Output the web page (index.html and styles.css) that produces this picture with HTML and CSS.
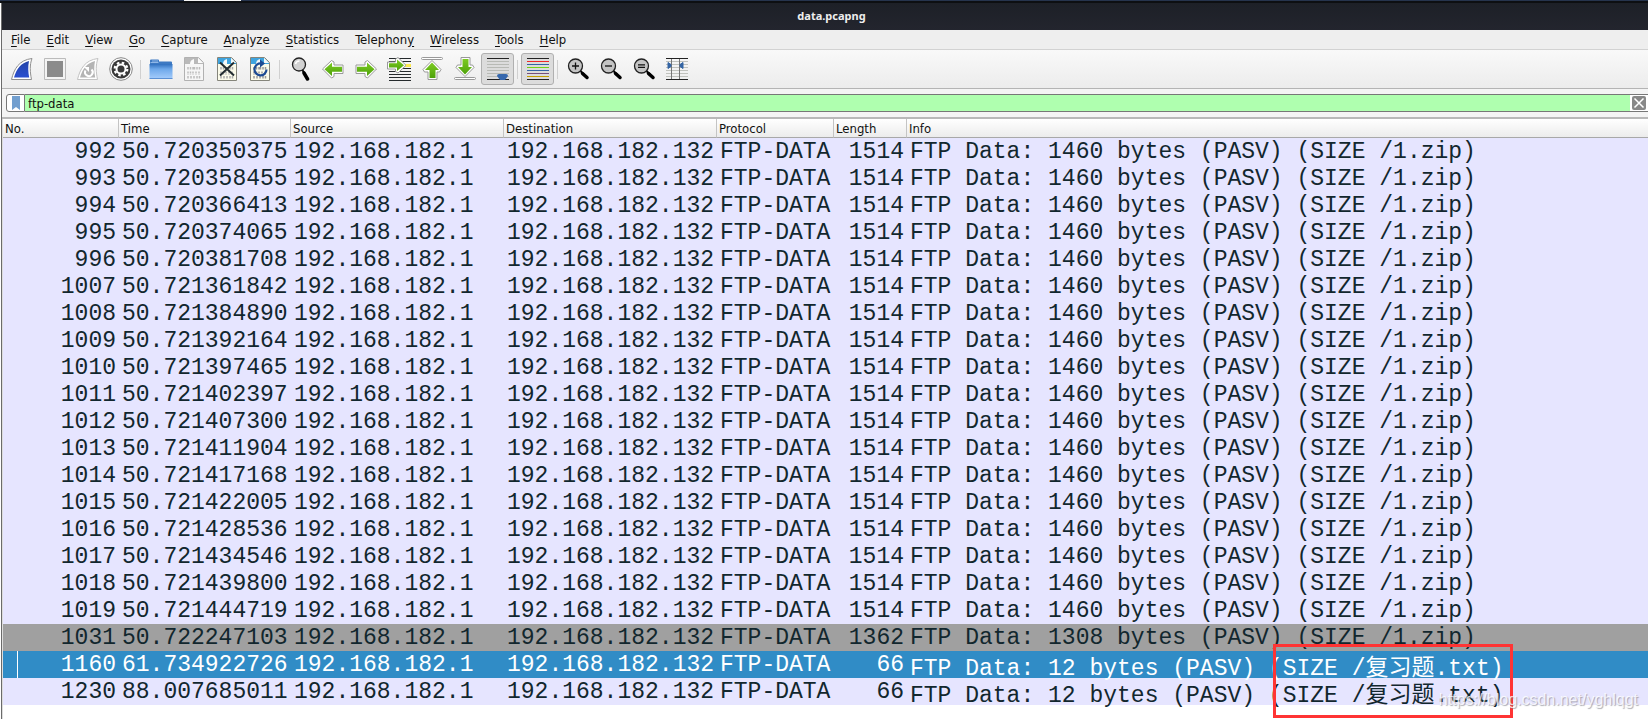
FILE: index.html
```
<!DOCTYPE html>
<html lang="en">
<head>
<meta charset="utf-8">
<title>data.pcapng</title>
<link rel="stylesheet" href="styles.css">
</head>
<body>
<svg class="defs" aria-hidden="true">
<defs>
<linearGradient id="blue" x1="0" y1="0" x2="0" y2="1"><stop offset="0" stop-color="#2344a8"/><stop offset="1" stop-color="#2a4fd0"/></linearGradient>
<linearGradient id="green" x1="0" y1="0" x2="0" y2="1"><stop offset="0" stop-color="#7ccb22"/><stop offset="1" stop-color="#4ea10a"/></linearGradient>
<linearGradient id="folder" x1="0" y1="0" x2="0" y2="1"><stop offset="0" stop-color="#2f6fbe"/><stop offset=".35" stop-color="#6ea8ea"/><stop offset="1" stop-color="#a3cbfb"/></linearGradient>
<g id="lens"><path d="M16 16l3.500 6" stroke="#000" stroke-width="3.500" stroke-linecap="round"/><path d="M13.500 12l3 4" stroke="#000" stroke-width="2"/><circle cx="11" cy="7.500" r="6.500" fill="#d2d2d2" stroke="#222" stroke-width="1.300"/></g>
<g id="zoomlens"><path d="M16.500 16.500l4.500 4" stroke="#000" stroke-width="3.500" stroke-linecap="round"/><path d="M14 13.500l4 4" stroke="#000" stroke-width="2"/><circle cx="9.500" cy="9" r="7" fill="#c4c4c4" stroke="#222" stroke-width="1.300"/></g>
<g id="digits" fill="none" stroke-width="1.500"><path d="M6 10v3M8.500 10v3M11 10v3M12.500 10v3M15 10v3M17.500 10v3M6 14.500v3M8.500 14.500v3M11 14.500v3M14 14.500v3M17 14.500v3M6 19v3M9 19v3M12 19v3M15 19v3M17.500 19v3" stroke-dasharray="2 .5"/></g>
</defs>
</svg>
<div class="desktop"><span class="desktop-tab"></span></div>
<div class="window">
<header class="titlebar">data.pcapng</header>
<nav class="menubar">
<button><u>F</u>ile</button><button><u>E</u>dit</button><button><u>V</u>iew</button><button><u>G</u>o</button><button><u>C</u>apture</button><button><u>A</u>nalyze</button><button><u>S</u>tatistics</button><button>Telephon<u>y</u></button><button><u>W</u>ireless</button><button><u>T</u>ools</button><button><u>H</u>elp</button>
</nav>
<div class="toolbar">
<button aria-label="Start capture"><svg viewBox="0 0 24 24"><path d="M1.500 22.500C4 12 9 3 22 1.500C19.500 8 20 15 21.500 22.500z" fill="#fff" stroke="#8f8f8f"/><path d="M4 20.500C6.500 12 11 6 19 4C17.800 10 18.200 15 19.200 20.500z" fill="url(#blue)"/></svg></button>
<button aria-label="Stop capture"><svg viewBox="0 0 24 24"><path d="M1.500 1.500h21v21h-21z" fill="#f4f4f4" stroke="#bbb"/><path d="M4 4h16v16H4z" fill="#8b8b8b"/></svg></button>
<button aria-label="Restart capture"><svg viewBox="0 0 24 24"><path d="M1.500 22.500C4 12 9 3 22 1.500C19.500 8 20 15 21.500 22.500z" fill="#fff" stroke="#c3c3c3"/><path d="M4 20.500C6.500 12 11 6 19 4C17.800 10 18.200 15 19.200 20.500z" fill="#b4b4b4"/><path d="M9.500 13.500a3.800 3.800 0 1 0 6-1" fill="none" stroke="#fff" stroke-width="2"/><path d="M8 10h5v5z" fill="#fff"/></svg></button>
<button aria-label="Capture options"><svg viewBox="0 0 24 24"><circle cx="12" cy="12" r="11.300" fill="#fff" stroke="#888"/><circle cx="12" cy="12" r="9.500" fill="#393939"/><circle cx="12" cy="12" r="4.500" fill="none" stroke="#fff" stroke-width="2"/><circle cx="12" cy="12" r="6.300" fill="none" stroke="#fff" stroke-width="2.200" stroke-dasharray="2.500 2.450"/></svg></button>
<span class="sep"></span>
<button aria-label="Open file"><svg viewBox="0 0 24 24"><path d="M1 6V3.500Q1 2.500 2 2.500h7q1 0 1 1v1h12q1 0 1 1V7H1z" fill="#3d79c2"/><path d="M1.500 5.500h8M3 4h6" stroke="#8fb7e8"/><path d="M.5 7h23v14.500h-23z" fill="url(#folder)"/><path d="M.5 21.500h23" stroke="#5b90d4"/></svg></button>
<button aria-label="Save file"><svg viewBox="0 0 24 24"><path d="M2.500 .5h14l5 5v18h-19z" fill="#f6f6f6" stroke="#b1b1b1"/><path d="M3 1h13l5 5v1H3z" fill="#b9b9b9"/><path d="M8 7q0-4 4-5v5zM16 1v5h5z" fill="#fafafa"/><use href="#digits" stroke="#bcbcbc"/></svg></button>
<button aria-label="Close file"><svg viewBox="0 0 24 24"><path d="M2.500 .5h14l5 5v18h-19z" fill="#fbfbea" stroke="#85857b"/><path d="M3 1h13l5 5v1H3z" fill="#3fa4de"/><path d="M8 7q0-4 4-5v5zM16 1v5h5z" fill="#f5f8f8"/><use href="#digits" stroke="#aaa"/><path d="M5 5.500l14 13M19 5.500l-14 13" stroke="#222c30" stroke-width="2"/></svg></button>
<button aria-label="Reload file"><svg viewBox="0 0 24 24"><path d="M2.500 .5h14l5 5v18h-19z" fill="#fbfbea" stroke="#85857b"/><path d="M3 1h13l5 5v1H3z" fill="#3fa4de"/><path d="M8 7q0-4 4-5v5zM16 1v5h5z" fill="#f5f8f8"/><use href="#digits" stroke="#999"/><path d="M13.500 6.500a6 6 0 1 0 5 6" fill="none" stroke="#1d4b93" stroke-width="2.200"/><path d="M12 2.500l5 4-5 4z" fill="#1d4b93"/></svg></button>
<span class="sep"></span>
<button aria-label="Find packet"><svg viewBox="0 0 24 24"><use href="#lens"/><path d="M7.500 7a4 4 0 0 1 4-3" fill="none" stroke="#fff" stroke-width="1.500"/></svg></button>
<button aria-label="Previous packet"><svg viewBox="0 0 24 24"><path d="M1.500 12L10.500 3.500L13 5v3h9v8.500h-9v3l-2.500 1.500z" fill="#fff" stroke="#999" stroke-linejoin="round"/><path d="M3.500 12.200l7.500-6.700v4.300h10v5H11v4.200z" fill="url(#green)"/></svg></button>
<button aria-label="Next packet"><svg viewBox="0 0 24 24"><g transform="matrix(-1 0 0 1 24 0)"><path d="M1.500 12L10.500 3.500L13 5v3h9v8.500h-9v3l-2.500 1.500z" fill="#fff" stroke="#999" stroke-linejoin="round"/><path d="M3.500 12.200l7.500-6.700v4.300h10v5H11v4.200z" fill="url(#green)"/></g></svg></button>
<button aria-label="Go to packet"><svg viewBox="0 0 24 24"><path d="M2 1.500h22M2 4.500h22M2 14.500h22M2 17.500h22M2 20.500h22M2 23.500h22M16 11.500h8" stroke="#252a2c"/><path d="M16 7h8v3h-8z" fill="#fce94f"/><path d="M.5 5h8V2L11 .5l8 7.800-8 7.700-2.500-1.500V12h-8z" fill="#fff" stroke="#999" stroke-linejoin="round"/><path d="M2 6.300h8V2.500l7 5.800-7 5.700v-3.500H2z" fill="url(#green)"/></svg></button>
<button aria-label="First packet"><svg viewBox="0 0 24 24"><rect x="1.500" y=".5" width="21" height="2" rx="1" fill="#fff" stroke="#999"/><path d="M12 3.500l9 9-1.500 2.500H17v7.500H8V15H4.500L3 12.500z" fill="#fff" stroke="#999" stroke-linejoin="round"/><path d="M12 5.500l7 7.500h-3.500v8h-6v-8H5z" fill="url(#green)"/></svg></button>
<button aria-label="Last packet"><svg viewBox="0 0 24 24"><rect x="1.500" y="20.500" width="21" height="2" rx="1" fill="#fff" stroke="#999"/><path d="M12 19.500l9-9-1.500-2.500H17V.5H8V8H4.500L3 10.500z" fill="#fff" stroke="#999" stroke-linejoin="round"/><path d="M12 17.500l7-7.500h-3.500V2h-6v8H5z" fill="url(#green)"/></svg></button>
<button class="on" aria-label="Auto scroll"><svg viewBox="0 0 24 24"><path d="M1 1.500h22M1 22.500h22" stroke="#222"/><path d="M1 4.500h22M1 7.500h22M1 10.500h22M1 13.500h22M1 16.500h22M1 19.500h22" stroke="#b8bab5"/><path d="M11 19q0-2 2-2h7q2 0 2 2l-3 4h-5z" fill="#3668ad"/></svg></button>
<span class="sep"></span>
<button class="on" aria-label="Colorize packets"><svg viewBox="0 0 24 24"><path d="M1 1.500h22M1 22.500h22" stroke="#222"/><path d="M1 4.500h22" stroke="#ef2929"/><path d="M1 7.500h22" stroke="#3465a4"/><path d="M1 10.500h22" stroke="#73d216"/><path d="M1 13.500h22" stroke="#3465a4"/><path d="M1 16.500h22" stroke="#75507b"/><path d="M1 19.500h22" stroke="#c4a000"/></svg></button>
<span class="sep"></span>
<button aria-label="Zoom in"><svg viewBox="0 0 24 24"><use href="#zoomlens"/><path d="M6 9h7M9.500 5.500v7" stroke="#111" stroke-width="1.300"/></svg></button>
<button aria-label="Zoom out"><svg viewBox="0 0 24 24"><use href="#zoomlens"/><path d="M6 9h7" stroke="#111" stroke-width="1.300"/></svg></button>
<button aria-label="Normal size"><svg viewBox="0 0 24 24"><use href="#zoomlens"/><path d="M6 7.800h7M6 10.300h7" stroke="#111" stroke-width="1.200"/></svg></button>
<button aria-label="Resize columns"><svg viewBox="0 0 24 24"><path d="M1 4.500h22M1 7.500h22M1 10.500h22M1 13.500h22M1 16.500h22M1 19.500h22" stroke="#c0c2bd"/><path d="M1 1.500h22M1 22.500h22" stroke="#222"/><path d="M6.500 2v20M14.500 2v20" stroke="#777"/><path d="M3 5.500l3 2v2l-3 2zM18 5.500l-3 2v2l3 2z" fill="#3465a4" stroke="#3465a4"/></svg></button>
</div>
<div class="filterbar">
<button class="bookmark" aria-label="Bookmarks"><svg viewBox="0 0 8 14"><path d="M0 0h8v14L4 11 0 14z" fill="#729fcf"/></svg></button>
<input class="filter" type="text" value="ftp-data" aria-label="Display filter">
<button class="clear" aria-label="Clear filter"><svg viewBox="0 0 14 14"><rect width="14" height="14" rx="2" fill="#888"/><path d="M2.500 2.500l9 9M11.500 2.500l-9 9" stroke="#fff" stroke-width="1.500"/></svg></button>
</div>
<main class="packets">
<table>
<colgroup><col class="c-no"><col class="c-time"><col class="c-addr"><col class="c-addr"><col class="c-proto"><col class="c-len"><col></colgroup>
<thead><tr><th>No.</th><th>Time</th><th>Source</th><th>Destination</th><th>Protocol</th><th>Length</th><th>Info</th></tr></thead>
<tbody>
<tr><td>992</td><td>50.720350375</td><td>192.168.182.1</td><td>192.168.182.132</td><td>FTP-DATA</td><td>1514</td><td>FTP Data: 1460 bytes (PASV) (SIZE /1.zip)</td></tr>
<tr><td>993</td><td>50.720358455</td><td>192.168.182.1</td><td>192.168.182.132</td><td>FTP-DATA</td><td>1514</td><td>FTP Data: 1460 bytes (PASV) (SIZE /1.zip)</td></tr>
<tr><td>994</td><td>50.720366413</td><td>192.168.182.1</td><td>192.168.182.132</td><td>FTP-DATA</td><td>1514</td><td>FTP Data: 1460 bytes (PASV) (SIZE /1.zip)</td></tr>
<tr><td>995</td><td>50.720374065</td><td>192.168.182.1</td><td>192.168.182.132</td><td>FTP-DATA</td><td>1514</td><td>FTP Data: 1460 bytes (PASV) (SIZE /1.zip)</td></tr>
<tr><td>996</td><td>50.720381708</td><td>192.168.182.1</td><td>192.168.182.132</td><td>FTP-DATA</td><td>1514</td><td>FTP Data: 1460 bytes (PASV) (SIZE /1.zip)</td></tr>
<tr><td>1007</td><td>50.721361842</td><td>192.168.182.1</td><td>192.168.182.132</td><td>FTP-DATA</td><td>1514</td><td>FTP Data: 1460 bytes (PASV) (SIZE /1.zip)</td></tr>
<tr><td>1008</td><td>50.721384890</td><td>192.168.182.1</td><td>192.168.182.132</td><td>FTP-DATA</td><td>1514</td><td>FTP Data: 1460 bytes (PASV) (SIZE /1.zip)</td></tr>
<tr><td>1009</td><td>50.721392164</td><td>192.168.182.1</td><td>192.168.182.132</td><td>FTP-DATA</td><td>1514</td><td>FTP Data: 1460 bytes (PASV) (SIZE /1.zip)</td></tr>
<tr><td>1010</td><td>50.721397465</td><td>192.168.182.1</td><td>192.168.182.132</td><td>FTP-DATA</td><td>1514</td><td>FTP Data: 1460 bytes (PASV) (SIZE /1.zip)</td></tr>
<tr><td>1011</td><td>50.721402397</td><td>192.168.182.1</td><td>192.168.182.132</td><td>FTP-DATA</td><td>1514</td><td>FTP Data: 1460 bytes (PASV) (SIZE /1.zip)</td></tr>
<tr><td>1012</td><td>50.721407300</td><td>192.168.182.1</td><td>192.168.182.132</td><td>FTP-DATA</td><td>1514</td><td>FTP Data: 1460 bytes (PASV) (SIZE /1.zip)</td></tr>
<tr><td>1013</td><td>50.721411904</td><td>192.168.182.1</td><td>192.168.182.132</td><td>FTP-DATA</td><td>1514</td><td>FTP Data: 1460 bytes (PASV) (SIZE /1.zip)</td></tr>
<tr><td>1014</td><td>50.721417168</td><td>192.168.182.1</td><td>192.168.182.132</td><td>FTP-DATA</td><td>1514</td><td>FTP Data: 1460 bytes (PASV) (SIZE /1.zip)</td></tr>
<tr><td>1015</td><td>50.721422005</td><td>192.168.182.1</td><td>192.168.182.132</td><td>FTP-DATA</td><td>1514</td><td>FTP Data: 1460 bytes (PASV) (SIZE /1.zip)</td></tr>
<tr><td>1016</td><td>50.721428536</td><td>192.168.182.1</td><td>192.168.182.132</td><td>FTP-DATA</td><td>1514</td><td>FTP Data: 1460 bytes (PASV) (SIZE /1.zip)</td></tr>
<tr><td>1017</td><td>50.721434546</td><td>192.168.182.1</td><td>192.168.182.132</td><td>FTP-DATA</td><td>1514</td><td>FTP Data: 1460 bytes (PASV) (SIZE /1.zip)</td></tr>
<tr><td>1018</td><td>50.721439800</td><td>192.168.182.1</td><td>192.168.182.132</td><td>FTP-DATA</td><td>1514</td><td>FTP Data: 1460 bytes (PASV) (SIZE /1.zip)</td></tr>
<tr><td>1019</td><td>50.721444719</td><td>192.168.182.1</td><td>192.168.182.132</td><td>FTP-DATA</td><td>1514</td><td>FTP Data: 1460 bytes (PASV) (SIZE /1.zip)</td></tr>
<tr class="muted"><td>1031</td><td>50.722247103</td><td>192.168.182.1</td><td>192.168.182.132</td><td>FTP-DATA</td><td>1362</td><td>FTP Data: 1308 bytes (PASV) (SIZE /1.zip)</td></tr>
<tr class="selected"><td>1160</td><td>61.734922726</td><td>192.168.182.1</td><td>192.168.182.132</td><td>FTP-DATA</td><td>66</td><td class="cjk">FTP Data: 12 bytes (PASV) (SIZE /复习题.txt)</td></tr>
<tr><td>1230</td><td>88.007685011</td><td>192.168.182.1</td><td>192.168.182.132</td><td>FTP-DATA</td><td>66</td><td class="cjk">FTP Data: 12 bytes (PASV) (SIZE /复习题.txt)</td></tr>
</tbody>
</table>
<div class="highlight"></div>
<div class="watermark">https://blog.csdn.net/yghlqgt</div>
</main>
</div>
</body>
</html>
```
FILE: styles.css
```
* { box-sizing: border-box; }
body {
  margin: 0;
  min-height: 100vh;
  display: flex;
  flex-direction: column;
  overflow: hidden;
  background: #fff;
  color: #111;
  font: 13px/18px "DejaVu Sans Condensed", "DejaVu Sans", sans-serif;
}
button {
  margin: 0;
  padding: 0;
  border: 0;
  background: none;
  color: inherit;
  font: inherit;
}
svg { display: block; }
.defs { position: absolute; width: 0; height: 0; }
.desktop { height: 3px; padding-left: 184px; background: #26344d; border-bottom: 2px solid #0d0f12; }
.desktop-tab { display: block; width: 57px; height: 1px; background: #f4f4f4; }
.window {
  flex: 1;
  display: flex;
  flex-direction: column;
  margin-left: 1px;
  border-left: 1px solid #6b6b6b;
}
.titlebar {
  height: 27px;
  padding-left: 13px;
  background: linear-gradient(#1d2027, #23252e);
  color: #eee;
  font-family: "Noto Sans", sans-serif;
  font-size: 11px;
  font-weight: bold;
  line-height: 26px;
  text-align: center;
}
.menubar {
  display: flex;
  height: 20px;
  gap: 16px;
  padding-left: 9px;
  background: #eee;
  border-bottom: 1px solid #d2d2d2;
}
.menubar u { text-underline-offset: 2px; }
.toolbar {
  display: flex;
  align-items: center;
  height: 39px;
  padding-left: 3px;
  background: linear-gradient(#f9f9f9, #ececec);
  border-bottom: 1px solid #b4b4b4;
}
.toolbar button {
  display: grid;
  place-items: center;
  width: 33px;
  height: 32px;
}
.toolbar svg { width: 24px; height: 24px; }
.toolbar .on {
  background: #dcdcdc;
  border: 1px solid #b0b0b0;
  border-radius: 3px;
}
.sep { width: 1px; height: 19px; margin: 0 3px; background: #d0d0d0; }
.filterbar {
  display: flex;
  height: 30px;
  padding: 5px 0 5px 4px;
  background: #f4f4f4;
  border-bottom: 2px solid #b8b8b8;
}
.bookmark {
  display: grid;
  place-items: center;
  width: 19px;
  background: #fff;
  border: 1px solid #777;
  border-radius: 3px 0 0 3px;
}
.bookmark svg { width: 8px; height: 14px; }
.filter {
  flex: 1;
  min-width: 0;
  padding: 2px 3px 0;
  border: solid #777;
  border-width: 1px 0;
  border-radius: 0;
  background: #afffaf;
  color: #111;
  font: inherit;
}
.clear {
  display: grid;
  place-items: center;
  width: 18px;
  background: #fff;
  border: solid #777;
  border-width: 1px 0;
}
.clear svg { width: 14px; height: 14px; }
.packets { position: relative; flex: 1; border-left: 1px solid #ddd; }
table { width: 100%; table-layout: fixed; border-collapse: separate; border-spacing: 0; }
.c-no { width: 116px; }
.c-time { width: 172px; }
.c-addr { width: 213px; }
.c-proto { width: 117px; }
.c-len { width: 73px; }
th {
  height: 19px;
  padding: 2px 2px 0;
  background: linear-gradient(#fff, #ececec);
  border-right: 1px solid #c4c4c4;
  border-bottom: 1px solid #a8a8a8;
  font-weight: normal;
  line-height: 16px;
  text-align: left;
}
th:last-child { border-right: 0; }
td {
  height: 27px;
  padding: 2px 3px 0;
  background: #e6e5ff;
  color: #12272e;
  font: 23px/25px "Liberation Mono", "Noto Sans CJK SC", monospace;
  vertical-align: top;
  white-space: nowrap;
}
td:nth-child(1), td:nth-child(6) { text-align: right; }
.cjk { padding-top: 10px; line-height: 17px; }
.muted td { background: #a0a0a0; }
.selected td { background: #308cc6; color: #fff; }
.selected td:first-child {
  background: linear-gradient(#fff, #fff) 14px 0 / 1px 100% no-repeat #308cc6;
}
.highlight {
  position: absolute;
  left: 1270px;
  bottom: 1px;
  width: 240px;
  height: 74px;
  border: 3px solid #ff3434;
}
.watermark {
  position: absolute;
  right: 10px;
  bottom: 10px;
  color: rgba(255, 255, 255, 0.8);
  font: 16px/18px "Liberation Sans", sans-serif;
  text-shadow: 1px 1px 1px rgba(120, 120, 130, 0.6);
}
```
